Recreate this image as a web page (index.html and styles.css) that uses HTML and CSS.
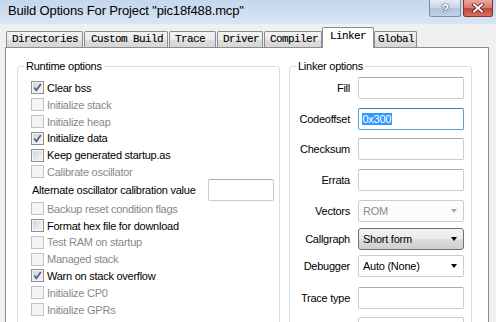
FILE: index.html
```html
<!DOCTYPE html>
<html>
<head>
<meta charset="utf-8">
<link rel="stylesheet" href="styles.css">
</head>
<body>
<div class="window">
  <div class="titlebar">
    <span class="title">Build Options For Project "pic18f488.mcp"</span>
    <div class="caption-buttons">
      <span class="cbtn help">?</span>
      <span class="cbtn close">
        <svg width="14" height="10" viewBox="0 0 14 10"><path d="M3 1.5 L11 8.5 M11 1.5 L3 8.5" stroke="#5a1a15" stroke-width="3.6" stroke-linecap="square"/><path d="M3 1.5 L11 8.5 M11 1.5 L3 8.5" stroke="#ffffff" stroke-width="2" stroke-linecap="square"/></svg>
      </span>
    </div>
  </div>
  <div class="tabs">
    <div class="tab tab-dir">Directories</div>
    <div class="tab tab-custom">Custom Build</div>
    <div class="tab tab-trace">Trace</div>
    <div class="tab tab-driver">Driver</div>
    <div class="tab tab-compiler">Compiler</div>
    <div class="tab tab-linker active">Linker</div>
    <div class="tab tab-global">Global</div>
  </div>
  <div class="panel">
    <fieldset class="group runtime">
      <legend>Runtime options</legend>
      <div class="rows">
        <div class="row"><span class="cb"><svg viewBox="0 0 11 11" width="11" height="11"><path d="M2.3 5.4 L4.4 8.2 L8.8 1.9" fill="none" stroke="#4b5f8e" stroke-width="1.7"/></svg></span>Clear bss</div>
        <div class="row disabled"><span class="cb"></span>Initialize stack</div>
        <div class="row disabled"><span class="cb"></span>Initialize heap</div>
        <div class="row"><span class="cb"><svg viewBox="0 0 11 11" width="11" height="11"><path d="M2.3 5.4 L4.4 8.2 L8.8 1.9" fill="none" stroke="#4b5f8e" stroke-width="1.7"/></svg></span>Initialize data</div>
        <div class="row"><span class="cb"></span>Keep generated startup.as</div>
        <div class="row disabled"><span class="cb"></span>Calibrate oscillator</div>
        <div class="row alt"><span>Alternate oscillator calibration value</span><span class="input alt-input"></span></div>
        <div class="row disabled"><span class="cb"></span>Backup reset condition flags</div>
        <div class="row"><span class="cb"></span>Format hex file for download</div>
        <div class="row disabled"><span class="cb"></span>Test RAM on startup</div>
        <div class="row disabled"><span class="cb"></span>Managed stack</div>
        <div class="row"><span class="cb"><svg viewBox="0 0 11 11" width="11" height="11"><path d="M2.3 5.4 L4.4 8.2 L8.8 1.9" fill="none" stroke="#4b5f8e" stroke-width="1.7"/></svg></span>Warn on stack overflow</div>
        <div class="row disabled"><span class="cb"></span>Initialize CP0</div>
        <div class="row disabled"><span class="cb"></span>Initialize GPRs</div>
      </div>
    </fieldset>
    <fieldset class="group linker">
      <legend>Linker options</legend>
      <div class="form">
        <span class="lbl">Fill</span><span class="input"></span>
        <span class="lbl">Codeoffset</span><span class="input focus"><span class="sel">0x300</span></span>
        <span class="lbl">Checksum</span><span class="input"></span>
        <span class="lbl">Errata</span><span class="input"></span>
        <span class="lbl">Vectors</span><span class="combo disabled"><span>ROM</span><span class="arrow"></span></span>
        <span class="lbl">Callgraph</span><span class="combo button"><span>Short form</span><span class="arrow"></span></span>
        <span class="lbl">Debugger</span><span class="combo"><span>Auto (None)</span><span class="arrow"></span></span>
        <span class="lbl">Trace type</span><span class="input"></span>
        <span class="lbl"></span><span class="combo last"><span>Generic</span><span class="arrow"></span></span>
      </div>
    </fieldset>
  </div>
</div>
</body>
</html>
```

FILE: styles.css
```css
* { box-sizing: border-box; }
html, body { margin: 0; padding: 0; }
body {
  font-family: "Liberation Sans", Arial, sans-serif;
  font-size: 11px;
  letter-spacing: -0.25px;
  color: #000;
  background: #f0f0f0;
}
.window {
  width: 496px;
  height: 322px;
  overflow: hidden;
  background: #f0f0f0;
}
.titlebar {
  height: 24px;
  display: flex;
  align-items: flex-start;
  background: linear-gradient(#c4d7ee, #d7e5f5);
}
.title {
  flex: 1;
  padding-left: 8px;
  font-size: 13px;
  letter-spacing: -0.15px;
  line-height: 22px;
}
.caption-buttons {
  display: flex;
  gap: 2px;
  margin-right: 3px;
}
.cbtn {
  height: 17px;
  display: flex;
  align-items: center;
  justify-content: center;
  border-radius: 0 0 3px 3px;
}
.help {
  width: 32px;
  border: 1px solid #7d8ea6;
  border-top: none;
  background: linear-gradient(#e3ebf5, #c6d4e6 50%, #b1c3da 51%, #c2d2e6);
  color: #fff;
  font-weight: bold;
  font-size: 13px;
  text-shadow: 0 0 1px #3b4d66, 0 0 1px #3b4d66, 0 0 1px #3b4d66;
}
.close {
  width: 30px;
  border: 1px solid #8d2e27;
  border-top: none;
  background: linear-gradient(#eaa79c, #d67a6d 50%, #c4473b 51%, #d5705f);
}
.tabs {
  margin-top: 3px;
  height: 20px;
  display: flex;
  align-items: flex-end;
  padding-left: 6px;
  font-family: "Liberation Mono", "Courier New", monospace;
  font-size: 11px;
  letter-spacing: -0.6px;
  -webkit-text-stroke: 0.12px #000;
}
.tab {
  height: 16px;
  line-height: 15px;
  margin-right: 1px;
  padding-left: 5px;
  border: 1px solid #898c95;
  border-bottom: none;
  border-radius: 2px 2px 0 0;
  background: linear-gradient(#f3f3f3, #ebebeb 50%, #dedede 51%, #d6d6d6);
  white-space: nowrap;
  overflow: hidden;
}
.tab-dir { width: 77px; }
.tab-custom { width: 84px; padding-left: 6px; }
.tab-trace { width: 47px; }
.tab-driver { width: 46px; }
.tab-compiler { width: 58px; margin-right: 0; }
.tab-linker { width: 52px; margin-right: 0; padding-left: 7px; }
.tab-global { width: 43px; padding-left: 3px; }
.tab.active {
  height: 21px;
  line-height: 17px;
  margin-bottom: -1px;
  background: #fff;
  position: relative;
  z-index: 1;
}
.panel {
  margin-left: 5px;
  width: 484px;
  height: 300px;
  border: 1px solid #898c95;
  background: #fff;
  display: flex;
  align-items: flex-start;
  padding: 12px 0 0 11px;
}
.group {
  margin: 0;
  padding: 0;
  min-width: 0;
  border: 1px solid #d5dfe5;
  border-radius: 3px;
  height: 300px;
}
.group legend {
  margin-left: 6px;
  padding: 0 2px;
  line-height: 13px;
}
.runtime { width: 263px; }
.linker { width: 183px; margin-left: 9px; }
.rows {
  display: flex;
  flex-direction: column;
  padding: 6.6px 5px 0 13px;
}
.row {
  height: 16.8px;
  display: flex;
  align-items: center;
  white-space: nowrap;
}
.row.disabled { color: #888; }
.cb {
  width: 13px;
  height: 13px;
  margin-right: 3px;
  flex: none;
  border: 1px solid #8e8f8f;
  background: linear-gradient(135deg, #d0d2d6, #f7f7f7);
  box-shadow: inset 0 0 0 1px #f4f4f4;
}
.cb svg { display: block; }
.row.disabled .cb {
  border-color: #c3c3c3;
  background: #f4f4f4;
  box-shadow: none;
}
.row.alt {
  height: 20px;
  padding-left: 1px;
}
.input {
  display: flex;
  align-items: center;
  height: 22px;
  border: 1px solid #c9ccd2;
  border-top-color: #abadb3;
  border-radius: 2px;
  background: #fff;
  padding-left: 3px;
}
.alt-input {
  width: 66px;
  margin-left: auto;
}
.form {
  display: grid;
  grid-template-columns: 60px 106px;
  grid-template-rows: 31px 30px 31px 31px 28px 27px 32px 30px 22px;
  column-gap: 8px;
  padding-top: 4px;
}
.lbl {
  text-align: right;
  line-height: 22px;
  white-space: nowrap;
}
.input.focus {
  border-color: #5a9ad6;
  border-top-color: #3d7bad;
}
.sel {
  background: #3399ff;
  color: #fff;
  line-height: 12px;
  padding: 0 0.5px;
}
.combo {
  display: flex;
  align-items: center;
  justify-content: space-between;
  height: 22px;
  border: 1px solid #c9ccd2;
  border-radius: 2px;
  background: #fff;
  padding: 0 6px 0 4px;
}
.combo.last { align-items: flex-start; padding-top: 4px; }
.combo.last .arrow { margin-top: 5px; }
.combo.disabled { color: #8a8a8a; background: #fcfcfc; }
.combo.disabled .arrow { border-top-color: #a8a8a8; }
.combo.button {
  border-color: #707070;
  border-radius: 3px;
  background: linear-gradient(#f2f2f2, #ebebeb 50%, #dddddd 51%, #cfcfcf);
}
.arrow {
  width: 0;
  height: 0;
  border-left: 3.5px solid transparent;
  border-right: 3.5px solid transparent;
  border-top: 4px solid #000;
}
```
